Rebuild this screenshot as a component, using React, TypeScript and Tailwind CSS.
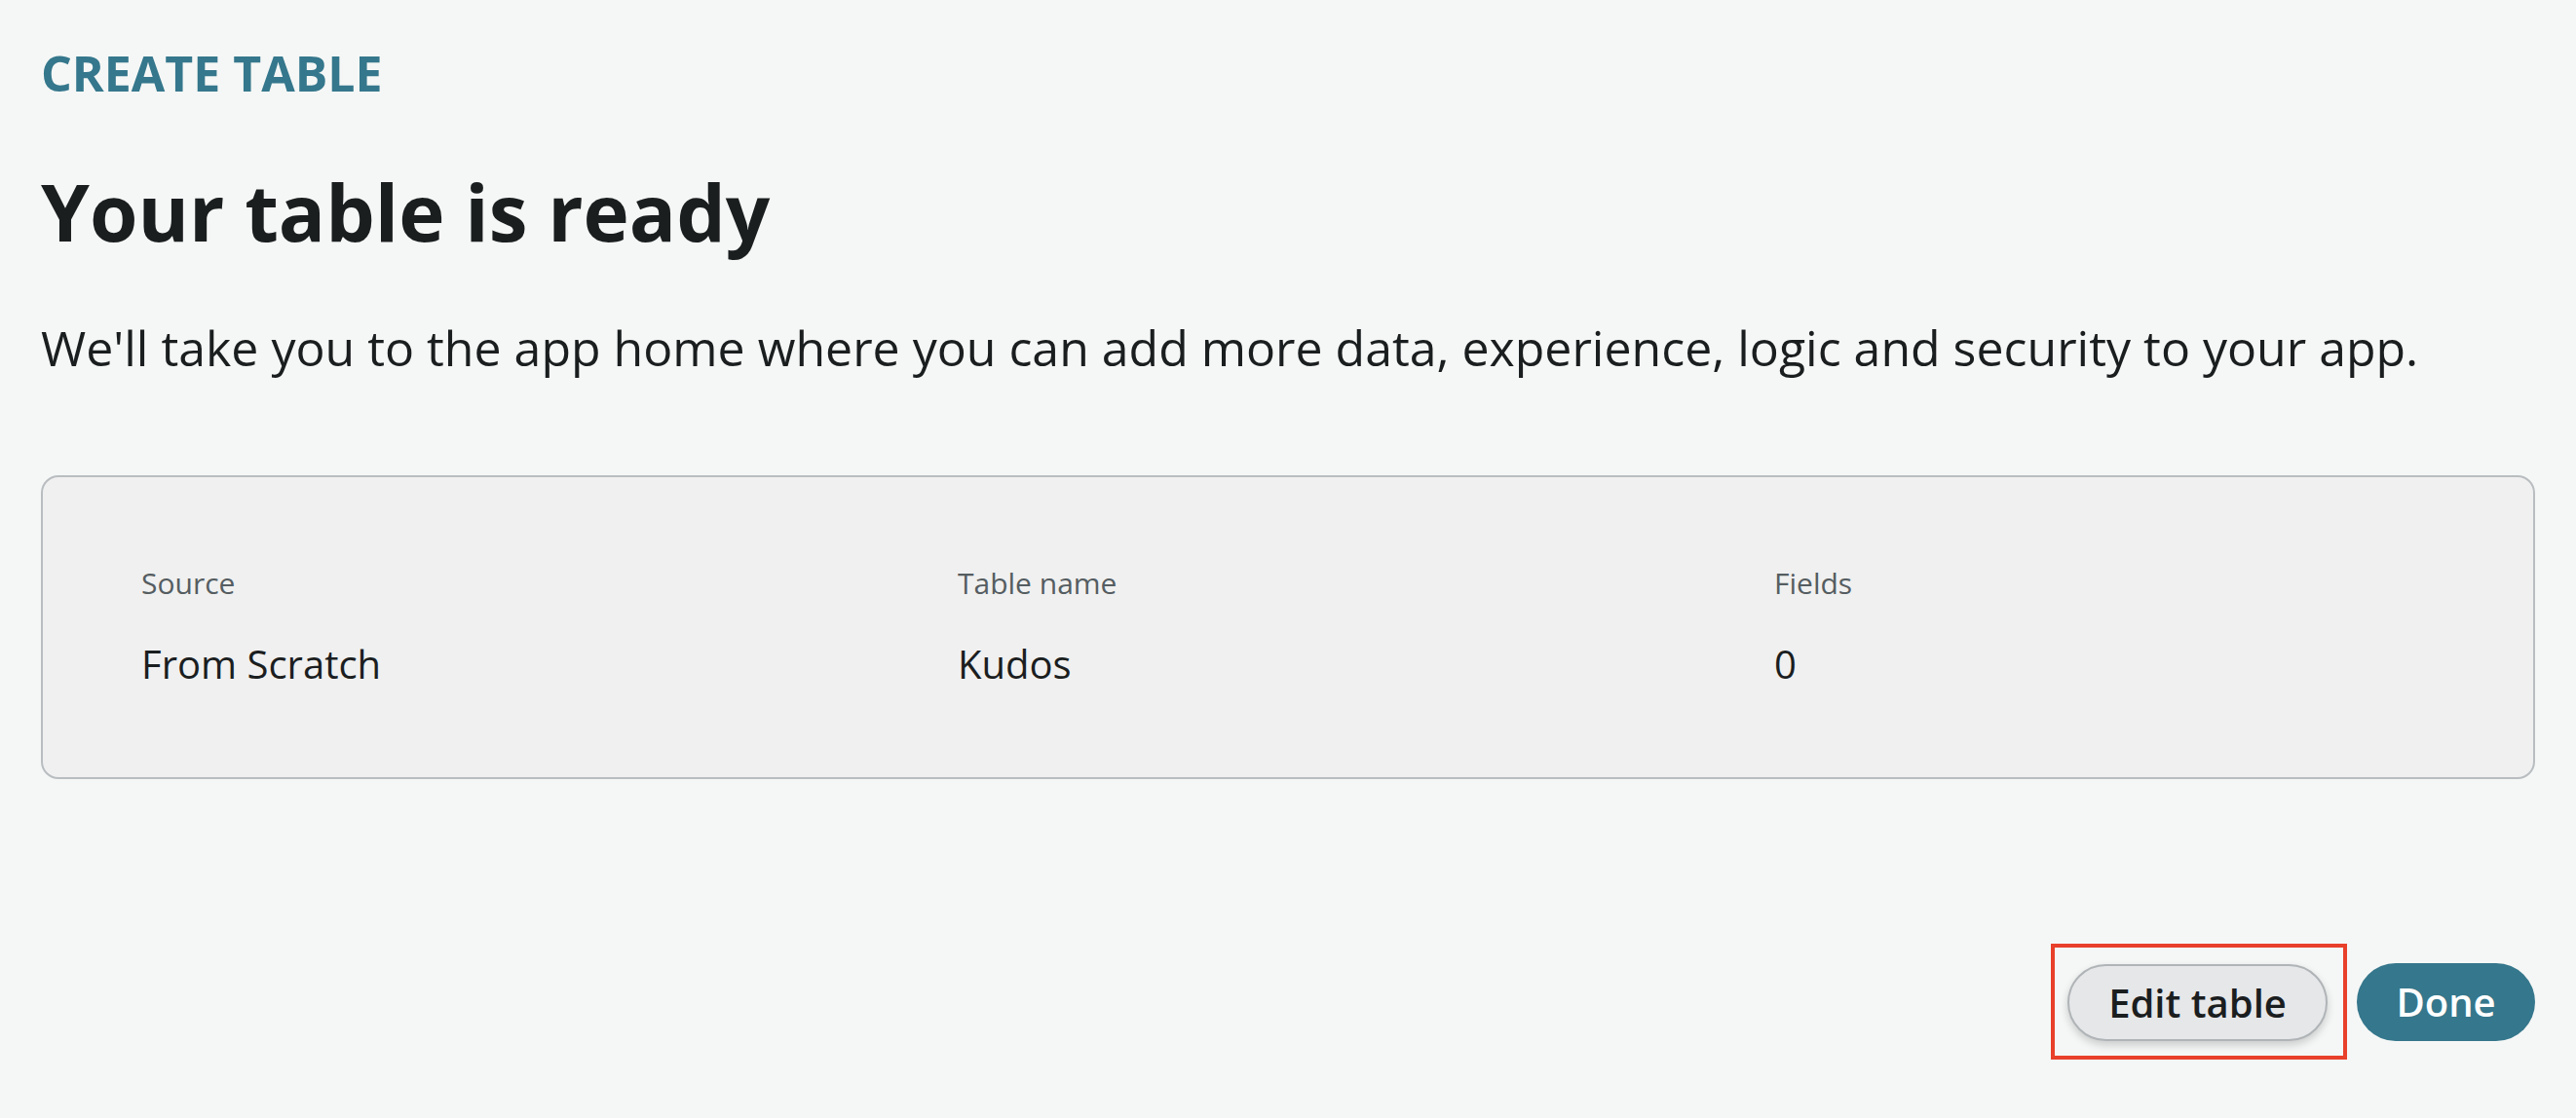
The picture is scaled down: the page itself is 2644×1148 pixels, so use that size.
import React from "react";

const font = { fontFamily: '"Open Sans", "Noto Sans", sans-serif' };

function Summary({ label, value }: { label: string; value: string }) {
  return (
    <div className="w-[838px] shrink-0">
      <div className="text-[30px] leading-[40px] text-[#555d61]">{label}</div>
      <div className="mt-[35px] text-[40px] leading-[56px] text-[#1b1e1f]">{value}</div>
    </div>
  );
}

export default function App() {
  return (
    <div
      className="min-h-[1148px] w-full bg-[#f5f7f6] px-[42px] pt-[43px]"
      style={font}
    >
      <div className="text-[50px] leading-[64px] font-bold text-[#35778c]">
        CREATE TABLE
      </div>
      <h1 className="mt-[62px] text-[80px] leading-[96px] font-bold text-[#1b1e1f]">
        Your table is ready
      </h1>
      <p className="mt-[59px] text-[50px] leading-[66px] text-[#1b1e1f]">
        We'll take you to the app home where you can add more data, experience, logic and security to your app.
      </p>

      <div className="mt-[98px] flex rounded-[18px] border-2 border-[#b9bdc0] bg-[#f0f0f0] pl-[101px] pt-[89px] pb-[88px]">
        <Summary label="Source" value="From Scratch" />
        <Summary label="Table name" value="Kudos" />
        <Summary label="Fields" value="0" />
      </div>

      <div className="mt-[169px] flex items-center justify-end gap-[10px]">
        <div className="border-4 border-[#e8402a] pl-[13px] pr-[16px] pt-[17px] pb-[15px]">
          <button className="h-[79px] w-[267px] rounded-full border-2 border-[#b0b4b7] bg-[#e6e7e9] text-[40px] font-semibold text-[#1b1e1f] shadow-[0_4px_8px_rgba(0,0,0,0.18)]">
            Edit table
          </button>
        </div>
        <button className="h-[80px] w-[183px] rounded-full bg-[#35778c] text-[40px] font-semibold text-white">
          Done
        </button>
      </div>
    </div>
  );
}
